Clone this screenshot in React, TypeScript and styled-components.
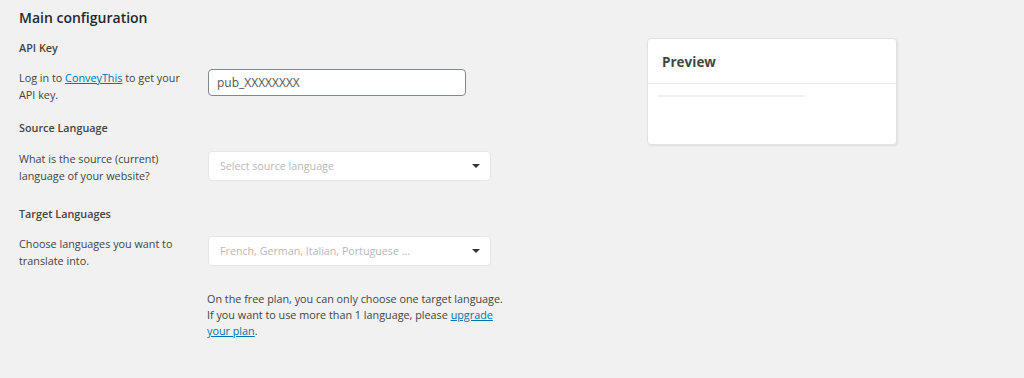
import styled, { createGlobalStyle } from "styled-components";

const GlobalStyle = createGlobalStyle`
  html, body {
    margin: 0;
    background: #f1f1f1;
    font-family: "Open Sans", "Noto Sans", sans-serif;
    color: #444;
  }
`;

const Page = styled.div`
  display: flex;
  align-items: flex-start;
  padding: 7px 0 0 19px;
  min-height: 371px;
`;

const Main = styled.div`
  width: 490px;
`;

const Title = styled.h1`
  font-size: 14px;
  font-weight: 600;
  color: #23282d;
  margin: 0 0 11px;
  line-height: 22px;
`;

const SectionTitle = styled.h2`
  font-size: 10.8px;
  font-weight: 600;
  color: #444;
  margin: 0;
  line-height: 16px;
`;

const Row = styled.div<{ $top?: number; $gap: number }>`
  display: grid;
  grid-template-columns: 189px 1fr;
  align-items: start;
  margin: ${(p) => p.$top ?? 13}px 0 ${(p) => p.$gap}px;
`;

const Hint = styled.p`
  margin: 0;
  padding-top: 1px;
  font-size: 10.8px;
  line-height: 16.5px;
  color: #444;
`;

const Link = styled.a`
  color: #0073aa;
  text-decoration: underline;
`;

const TextInput = styled.div`
  width: 258px;
  height: 27px;
  box-sizing: border-box;
  border: 1px solid #7e8993;
  border-radius: 4px;
  background: #fff;
  padding: 0 8px;
  display: flex;
  align-items: center;
  font-size: 12px;
  color: #555;
`;

const Select = styled.div`
  width: 283px;
  height: 30px;
  margin-top: 1px;
  box-sizing: border-box;
  border: 1px solid #e6e6e6;
  border-radius: 4px;
  background: #fff;
  padding: 0 10px 0 11px;
  display: flex;
  align-items: center;
  justify-content: space-between;
  font-size: 10.7px;
  color: #b8b8b8;
`;

const Caret = styled.span`
  width: 0;
  height: 0;
  border-left: 4px solid transparent;
  border-right: 4px solid transparent;
  border-top: 4px solid #333;
`;

const Note = styled.p`
  margin: 0 0 0 188px;
  width: 310px;
  font-size: 10.8px;
  line-height: 16px;
  color: #444;
  white-space: nowrap;
`;

const Card = styled.div`
  margin: 31px 0 0 138px;
  width: 250px;
  height: 107px;
  box-sizing: border-box;
  background: #fff;
  border: 1px solid #e2e2e2;
  border-radius: 4px;
  box-shadow: 1px 1px 2px rgba(0, 0, 0, 0.08);
`;

const CardHeader = styled.div`
  padding: 14px 14px 11px;
  border-bottom: 1px solid #ececec;
  font-size: 13.5px;
  font-weight: 700;
  color: #444;
  line-height: 19px;
`;

const CardBody = styled.div`
  padding: 11px 10px;
`;

const Placeholder = styled.div`
  width: 147px;
  height: 2px;
  background: #f0f0f0;
`;

export default function App() {
  return (
    <>
      <GlobalStyle />
      <Page>
        <Main>
          <Title>Main configuration</Title>

          <SectionTitle>API Key</SectionTitle>
          <Row $gap={17}>
            <Hint>
              Log in to <Link href="#">ConveyThis</Link> to get your
              <br />
              API key.
            </Hint>
            <TextInput>pub_XXXXXXXX</TextInput>
          </Row>

          <SectionTitle>Source Language</SectionTitle>
          <Row $top={14} $gap={22}>
            <Hint>
              What is the source (current)
              <br />
              language of your website?
            </Hint>
            <Select>
              Select source language
              <Caret />
            </Select>
          </Row>

          <SectionTitle>Target Languages</SectionTitle>
          <Row $gap={22}>
            <Hint>
              Choose languages you want to
              <br />
              translate into.
            </Hint>
            <Select>
              French, German, Italian, Portuguese ...
              <Caret />
            </Select>
          </Row>

          <Note>
            On the free plan, you can only choose one target language.
            <br />
            If you want to use more than 1 language, please{" "}
            <Link href="#">upgrade</Link>
            <br />
            <Link href="#">your plan</Link>.
          </Note>
        </Main>

        <Card>
          <CardHeader>Preview</CardHeader>
          <CardBody>
            <Placeholder />
          </CardBody>
        </Card>
      </Page>
    </>
  );
}
